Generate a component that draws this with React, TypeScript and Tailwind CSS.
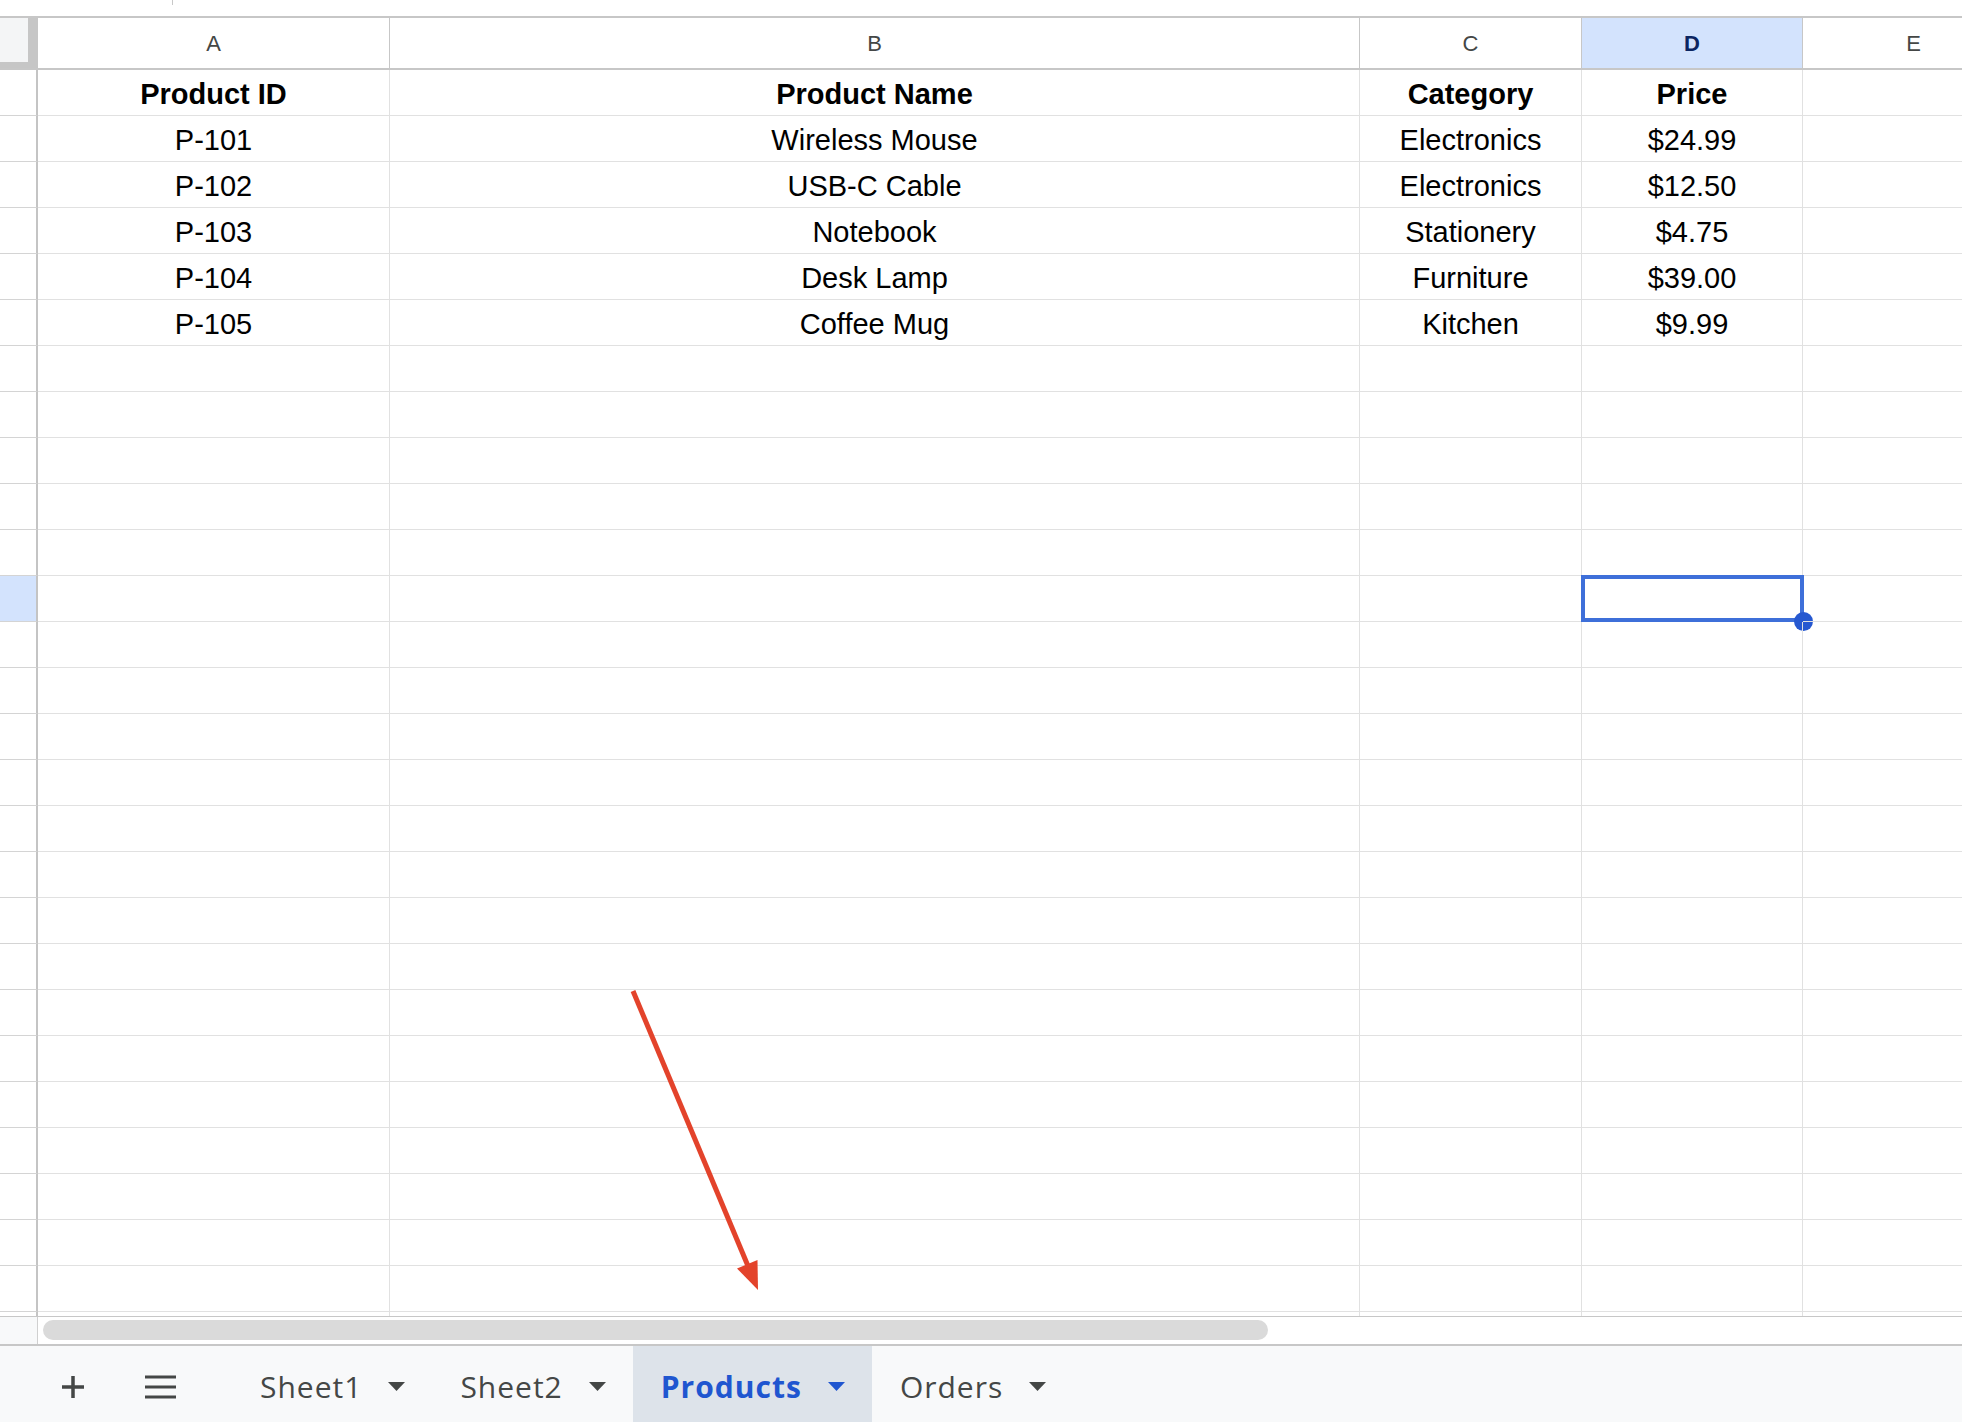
import React from "react";

const colWidths = [352, 970, 222, 221, 222];
const letters = ["A", "B", "C", "D", "E"];

const data: string[][] = [
  ["Product ID", "Product Name", "Category", "Price"],
  ["P-101", "Wireless Mouse", "Electronics", "$24.99"],
  ["P-102", "USB-C Cable", "Electronics", "$12.50"],
  ["P-103", "Notebook", "Stationery", "$4.75"],
  ["P-104", "Desk Lamp", "Furniture", "$39.00"],
  ["P-105", "Coffee Mug", "Kitchen", "$9.99"],
];

const TOTAL_ROWS = 27;
const SELECTED_ROW = 11; // zero-based, row 12
const SELECTED_COL = 3; // column D

const tabs = [
  { name: "Sheet1", active: false },
  { name: "Sheet2", active: false },
  { name: "Products", active: true },
  { name: "Orders", active: false },
];

function Caret({ color }: { color: string }) {
  return (
    <svg width="17" height="9" viewBox="0 0 17 9" className="shrink-0">
      <path d="M0 0 L17 0 L8.5 9 Z" fill={color} />
    </svg>
  );
}

function ColumnHeader() {
  return (
    <div className="flex h-[54px] shrink-0 border-t-2 border-b-2 border-[#c7c7c7]">
      <div className="w-[38px] shrink-0 bg-[#c6c6c6]">
        <div className="w-[28px] h-[44px] bg-[#f4f5f6]" />
      </div>
      {letters.map((l, i) => (
        <div
          key={l}
          style={{ width: colWidths[i] }}
          className={
            "shrink-0 flex items-center justify-center border-r border-[#c7c7c7] text-[22px] " +
            (i === SELECTED_COL
              ? "bg-[#d3e3fd] text-[#0b2561] font-bold"
              : "bg-white text-[#444746]")
          }
        >
          {l}
        </div>
      ))}
    </div>
  );
}

function Row({ index }: { index: number }) {
  const values = data[index] ?? [];
  const bold = index === 0;
  const rowSelected = index === SELECTED_ROW;
  return (
    <div className="flex h-[46px] shrink-0">
      <div
        className={
          "w-[38px] shrink-0 border-r-2 border-b border-r-[#c4c4c4] border-b-[#d4d4d4] " +
          (rowSelected ? "bg-[#d3e3fd]" : "bg-white")
        }
      />
      {colWidths.map((w, c) => (
        <div
          key={c}
          style={{ width: w }}
          className={
            "relative shrink-0 flex items-center justify-center pt-[4px] border-r border-b border-[#e1e1e1] text-[29px] text-black " +
            (bold ? "font-bold" : "")
          }
        >
          {values[c] ?? ""}
          {rowSelected && c === SELECTED_COL && (
            <>
              <div className="absolute left-[-1px] top-[-1px] right-[-2px] bottom-[-1px] border-[4px] border-[#3e6fd9]" />
              <div className="absolute right-[-11px] bottom-[-10px] w-[19px] h-[19px] rounded-full bg-[#2658d0]" />
            </>
          )}
        </div>
      ))}
    </div>
  );
}

function TabBar() {
  return (
    <div className="flex h-[78px] shrink-0 border-t-2 border-[#c7c7c7] bg-[#f8f9fa] font-['Open_Sans',sans-serif] text-[30px]">
      <div className="flex items-center pl-[62px] pt-[6px]">
        <svg width="22" height="22" viewBox="0 0 22 22">
          <path d="M11 0 V22 M0 11 H22" stroke="#444746" strokeWidth="3.5" />
        </svg>
        <svg width="31" height="24" viewBox="0 0 31 24" className="ml-[61px]">
          <path d="M0 2 H31 M0 12 H31 M0 22 H31" stroke="#444746" strokeWidth="3" />
        </svg>
      </div>
      <div className="flex ml-[56px]">
        {tabs.map((t) => (
          <div
            key={t.name}
            className={
              "flex items-center gap-[26px] pl-[28px] pr-[27px] pt-[4px] tracking-[1px] " +
              (t.active
                ? "bg-[#dde3ea] text-[#1f56d0] font-bold"
                : "text-[#444746]")
            }
          >
            <span>{t.name}</span>
            <Caret color={t.active ? "#1f56d0" : "#444746"} />
          </div>
        ))}
      </div>
    </div>
  );
}

export default function App() {
  return (
    <div className="relative w-[1962px] h-[1422px] overflow-hidden bg-white font-['Liberation_Sans',Arial,sans-serif] flex flex-col">
      {/* cut-off toolbar above */}
      <div className="relative h-[16px] shrink-0">
        <div className="absolute left-[172px] top-0 w-[1px] h-[5px] bg-[#c8c8c8]" />
      </div>

      <ColumnHeader />
      {Array.from({ length: TOTAL_ROWS }).map((_, i) => (
        <Row key={i} index={i} />
      ))}

      {/* gridline stub below the last row */}
      <div className="flex h-[4px] shrink-0">
        <div className="w-[38px] shrink-0 border-r-2 border-[#c4c4c4]" />
        {colWidths.map((w, c) => (
          <div key={c} style={{ width: w }} className="shrink-0 border-r border-[#e1e1e1]" />
        ))}
      </div>

      {/* horizontal scrollbar */}
      <div className="flex h-[28px] shrink-0 border-t border-[#c7c7c7]">
        <div className="w-[38px] shrink-0 border-r border-[#d0d0d0] bg-[#f8f9fa]" />
        <div className="flex-1 bg-white">
          <div className="ml-[5px] mt-[3px] h-[20px] w-[1225px] rounded-full bg-[#dadada]" />
        </div>
      </div>

      <TabBar />

      {/* annotation arrow */}
      <svg
        className="absolute left-0 top-0 pointer-events-none"
        width="1962"
        height="1422"
        viewBox="0 0 1962 1422"
      >
        <line x1="633" y1="991" x2="748" y2="1266" stroke="#e3432b" strokeWidth="5" />
        <path d="M758 1290 L737 1268.5 L757.5 1260 Z" fill="#e3432b" />
      </svg>
    </div>
  );
}
